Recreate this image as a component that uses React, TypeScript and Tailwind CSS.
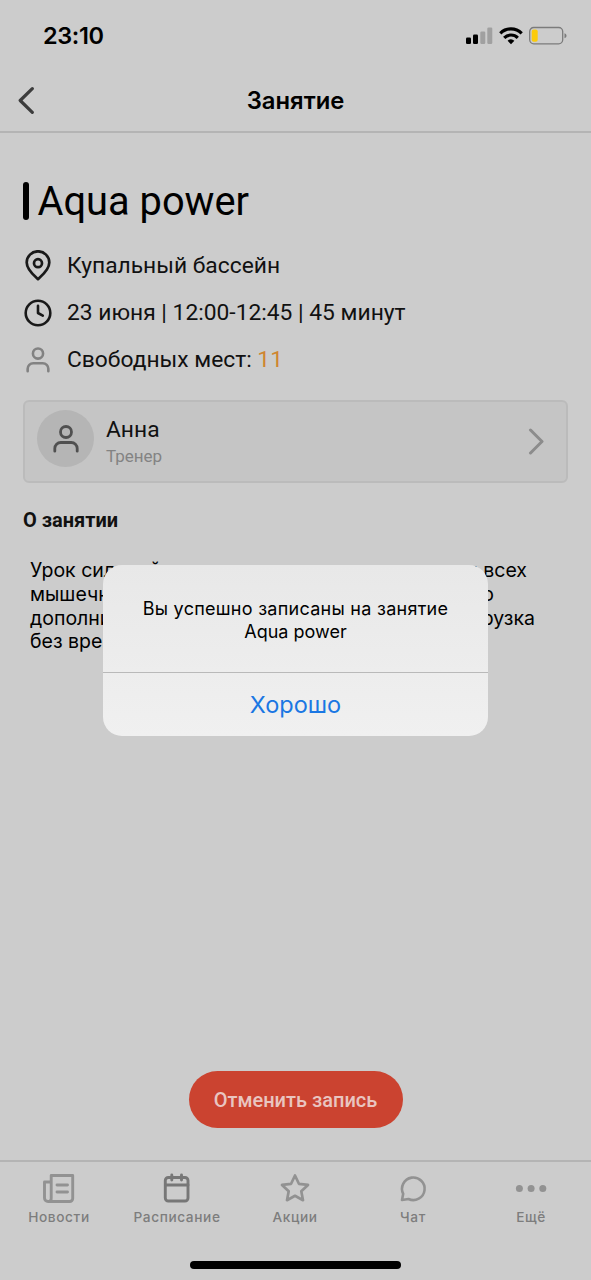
import type { ReactNode } from "react";

const description = [
  { start: "Урок силовой", end: "для всех", width: "w-[497px]" },
  { start: "мышечных", end: "но", width: "w-[464px]" },
  { start: "дополнив", end: "нагрузка", width: "w-[505px]" },
  { start: "без времени", end: "", width: "w-[505px]" },
];

function UserIcon({ className }: { className: string }) {
  return (
    <svg viewBox="0 0 26 28" className={className} fill="none" stroke="currentColor" strokeWidth="2.800" strokeLinecap="round">
      <circle cx="13" cy="7" r="5.500" />
      <path d="M1.800 26.200v-2.700a6 6 0 0 1 6-6h10.400a6 6 0 0 1 6 6v2.700" />
    </svg>
  );
}

function StatusBar() {
  return (
    <div className="flex h-[70px] items-center pl-[43px] pr-6 pt-[2px]">
      <span className="text-[23.5px] font-semibold leading-none tracking-[-0.4px]">23:10</span>
      <svg viewBox="0 0 102 20" className="ml-auto h-5 w-[102px]">
        <g>
          <rect x="1" y="11.500" width="5" height="6.500" rx="1.300" />
          <rect x="8" y="8.500" width="5" height="9.500" rx="1.300" />
          <rect x="15.300" y="5.500" width="5" height="12.500" rx="1.300" fill="#a0a0a0" />
          <rect x="22.300" y="1.500" width="5" height="16.500" rx="1.300" fill="#a0a0a0" />
        </g>
        <g fill="none" stroke="#000" strokeWidth="3.200">
          <path d="M35.300 7.300a15.300 15.300 0 0 1 21.400 0" />
          <path d="M39.200 11.800a9.700 9.700 0 0 1 13.600 0" />
        </g>
        <path d="M46 18.200l-3.400-3.400a5 5 0 0 1 6.800 0z" />
        <rect x="64.700" y="1.500" width="33" height="16.300" rx="4" fill="none" stroke="#7b7b7b" strokeWidth="1.300" />
        <rect x="66.700" y="3.500" width="6" height="12.300" rx="2" fill="#fccb0a" />
        <path d="M99.500 7.200c2.700 1 2.700 4 0 5z" fill="#7b7b7b" />
      </svg>
    </div>
  );
}

function InfoRow({ icon, children }: { icon: ReactNode; children: ReactNode }) {
  return (
    <div className="flex h-[47px] items-center">
      <div className="flex w-[30px] justify-center">{icon}</div>
      <div className="ml-[14px] whitespace-nowrap pt-[2px] text-[22.8px] leading-none">{children}</div>
    </div>
  );
}

function Tab({ label, children }: { label: string; children: ReactNode }) {
  return (
    <div className="flex flex-1 flex-col items-center text-[#929292]">
      <svg viewBox="0 0 32 32" className="size-8" fill="none" stroke="currentColor" strokeWidth="2.900" strokeLinecap="round" strokeLinejoin="round">
        {children}
      </svg>
      <span className="mt-[5px] text-[13.7px] font-medium leading-4 tracking-[0.6px] text-[#7d7d7d]">{label}</span>
    </div>
  );
}

export default function App() {
  return (
    <div className="relative flex h-[1280px] w-[591px] flex-col overflow-hidden bg-[#cccccc] font-['Inter',sans-serif] text-black">
      <StatusBar />
      <header className="flex h-[63px] items-center border-b-2 border-[#b4b4b4] px-[18px]">
        <svg viewBox="0 0 18 28" className="h-7 w-[18px]" fill="none" stroke="#3c3c3c" strokeWidth="3.200" strokeLinecap="round" strokeLinejoin="round">
          <path d="M14.300 1.700L2.200 13.500l12.100 11.800" />
        </svg>
        <h1 className="flex-1 pr-[18px] text-center text-[23.8px] font-semibold leading-none">Занятие</h1>
      </header>

      <main className="flex flex-1 flex-col px-[23px] font-['Roboto',sans-serif] text-[#111]">
        <div className="mt-[49px] flex h-[38px] items-center text-black">
          <span className="h-[38px] w-[6px] rounded-full bg-black" />
          <h2 className="ml-[8.5px] pt-px text-[39.8px] leading-none">Aqua power</h2>
        </div>

        <div className="mt-[22px]">
          <InfoRow
            icon={
              <svg viewBox="0 0 28 32" className="h-8 w-7" fill="none" stroke="#191919" strokeWidth="2.700" strokeLinejoin="round">
                <path d="M14 29.200C10.500 26 2.700 20 2.700 12.600a11.300 11.300 0 0 1 22.600 0C25.300 20 17.500 26 14 29.200z" />
                <circle cx="14" cy="13.200" r="4" />
              </svg>
            }
          >
            Купальный бассейн
          </InfoRow>
          <InfoRow
            icon={
              <svg viewBox="0 0 28 28" className="size-7" fill="none" stroke="#191919" strokeWidth="2.600" strokeLinecap="round" strokeLinejoin="round">
                <circle cx="14" cy="14" r="12.300" />
                <path d="M14 6.800V14l4.800 2.600" />
              </svg>
            }
          >
            23 июня | 12:00-12:45 | 45 минут
          </InfoRow>
          <InfoRow icon={<UserIcon className="h-[26px] w-6 text-[#828282]" />}>
            Свободных мест: <span className="text-[#cf8530]">11</span>
          </InfoRow>
        </div>

        <div className="mt-[17px] flex h-[83px] items-center rounded-md border-2 border-[#bbbbbb] bg-[#c5c5c5] pl-3 pr-[21px]">
          <div className="mb-[6px] flex size-[57px] items-center justify-center rounded-full bg-[#b5b5b5]">
            <UserIcon className="h-7 w-[26px] text-[#505050]" />
          </div>
          <div className="ml-3 pt-px">
            <div className="text-[22.8px] leading-7">Анна</div>
            <div className="text-[17px] leading-6 text-[#838383]">Тренер</div>
          </div>
          <svg viewBox="0 0 18 28" className="ml-auto h-7 w-[18px]" fill="none" stroke="#8c8c8c" strokeWidth="3" strokeLinecap="round" strokeLinejoin="round">
            <path d="M3.500 2L15 13.500 3.500 25" />
          </svg>
        </div>

        <h3 className="mt-[25px] text-[20px] font-bold leading-6">О занятии</h3>
        <div className="ml-[7px] mt-[27px] font-['Inter',sans-serif] text-[19.5px] leading-[23.8px] text-black">
          {description.map((line) => (
            <div key={line.start} className={`flex justify-between whitespace-nowrap ${line.width}`}>
              <span>{line.start}</span>
              <span>{line.end}</span>
            </div>
          ))}
        </div>

        <button className="mb-8 mt-auto h-[57px] w-[214px] self-center rounded-full bg-[#cb4330] text-[20px] font-medium text-[#e9c5c0]">
          Отменить запись
        </button>
      </main>

      <nav className="flex h-[120px] border-t-2 border-[#b4b4b4] pr-px pt-[10px]">
        <Tab label="Новости">
          <path d="M8.200 3.500h21.500v23a3 3 0 0 1-3 3H5a3.500 3.500 0 0 1-3.500-3.500V10h6.700M8.200 3.500V26a3 3 0 0 1-3 3.500M14 13h10.500M14 20h10.500" />
        </Tab>
        <Tab label="Расписание">
          <g stroke="#777">
            <rect x="4.300" y="5.500" width="22.700" height="23.500" rx="3" />
            <path d="M4.500 13H27M10.800 3v5M20.500 3v5" />
          </g>
        </Tab>
        <Tab label="Акции">
          <path strokeWidth="2.700" d="M16 3.500l3.900 8.300 9.100 1.100-6.700 6.300 1.700 9-8-4.400-8 4.400 1.700-9L3 12.900l9.100-1.100z" />
        </Tab>
        <Tab label="Чат">
          <path strokeWidth="2.600" d="M5 28l1.200-6.200A11.300 11.300 0 1 1 11.500 27z" />
        </Tab>
        <Tab label="Ещё">
          <g fill="currentColor" stroke="none">
            <circle cx="4.400" cy="16.500" r="3.500" />
            <circle cx="16.100" cy="16.500" r="3.500" />
            <circle cx="27.800" cy="16.500" r="3.500" />
          </g>
        </Tab>
      </nav>

      <div className="absolute bottom-[11px] left-[190px] h-2 w-[211px] rounded-full bg-black" />

      <div className="absolute left-[103px] top-[565px] flex h-[171px] w-[385px] flex-col overflow-hidden rounded-[19px] bg-linear-to-b from-[#e8e8e8] to-[#f0f0f0]">
        <p className="h-[107px] pt-8 text-center text-[18px] leading-[23px]">
          <span className="tracking-[0.27px]">Вы успешно записаны на занятие</span>
          <br />
          Aqua power
        </p>
        <button className="flex-1 border-t border-[#b9b9b9] text-[23.5px] text-[#1a77e3]">Хорошо</button>
      </div>
    </div>
  );
}
